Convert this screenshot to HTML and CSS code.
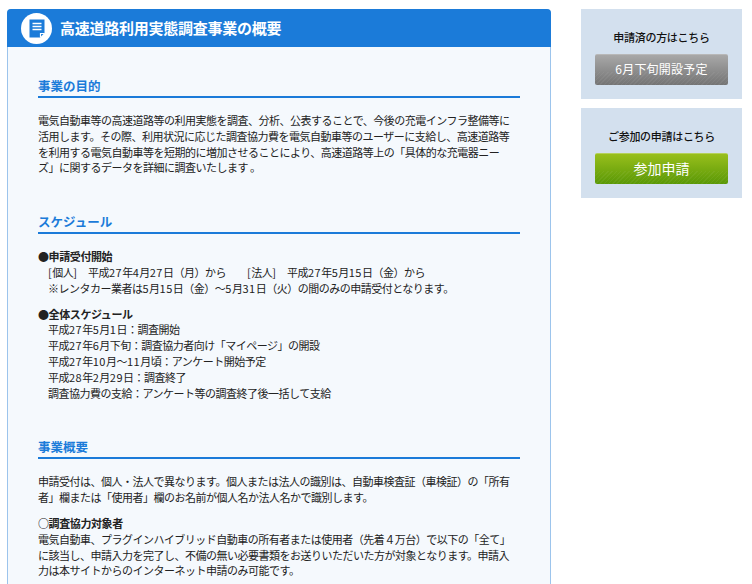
FILE: index.html
```html
<!DOCTYPE html>
<html lang="ja">
<head>
<meta charset="utf-8">
<title>高速道路利用実態調査事業の概要</title>
<link rel="stylesheet" href="styles.css">
</head>
<body>
<div class="page">
  <main class="card">
    <header class="card-head">
      <span class="badge">
        <svg width="16" height="19" viewBox="0 0 16 19"><path d="M0.5 0.5h15v13.5l-4.500 4.500H0.5z" fill="#1b7bd9"/><path d="M3.500 4.500h9M3.500 7.500h9M3.500 10.500h9" stroke="#fff" stroke-width="1.300"/><path d="M11.500 18v-3.500h4" fill="none" stroke="#fff" stroke-width="1.200"/></svg>
      </span>
      <h1>高速道路利用実態調査事業の概要</h1>
    </header>
    <div class="card-body">
      <section class="sec sec-first">
        <h2>事業の目的</h2>
        <p>電気自動車等の高速道路等の利用実態を調査、分析、公表することで、今後の充電インフラ整備等に<br>活用します。その際、利用状況に応じた調査協力費を電気自動車等のユーザーに支給し、高速道路等<br>を利用する電気自動車等を短期的に増加させることにより、高速道路等上の「具体的な充電器ニー<br>ズ」に関するデータを詳細に調査いたします 。</p>
      </section>
      <section class="sec">
        <h2>スケジュール</h2>
        <div class="block">
          <h3>●申請受付開始</h3>
          <div class="indent"><span class="n">[</span>個人<span class="n">]</span>　平成<span class="n">27</span>年<span class="n">4</span>月<span class="n">27</span>日（月）から　　<span class="n">[</span>法人<span class="n">]</span>　平成<span class="n">27</span>年<span class="n">5</span>月<span class="n">15</span>日（金）から<br>※レンタカー業者は<span class="n">5</span>月<span class="n">15</span>日（金）～<span class="n">5</span>月<span class="n">31</span>日（火）の間のみの申請受付となります。</div>
        </div>
        <div class="block">
          <h3>●全体スケジュール</h3>
          <div class="indent">平成<span class="n">27</span>年<span class="n">5</span>月<span class="n">1</span>日：調査開始<br>平成<span class="n">27</span>年<span class="n">6</span>月下旬：調査協力者向け「マイページ」の開設<br>平成<span class="n">27</span>年<span class="n">10</span>月～<span class="n">11</span>月頃：アンケート開始予定<br>平成<span class="n">28</span>年<span class="n">2</span>月<span class="n">29</span>日：調査終了<br>調査協力費の支給：アンケート等の調査終了後一括して支給</div>
        </div>
      </section>
      <section class="sec">
        <h2>事業概要</h2>
        <p>申請受付は、個人・法人で異なります。個人または法人の識別は、自動車検査証（車検証）の「所有<br>者」欄または「使用者」欄のお名前が個人名か法人名かで識別します。</p>
        <div class="block">
          <h3>○調査協力対象者</h3>
          <p>電気自動車、プラグインハイブリッド自動車の所有者または使用者（先着４万台）で以下の「全て」<br>に該当し、申請入力を完了し、不備の無い必要書類をお送りいただいた方が対象となります。申請入<br>力は本サイトからのインターネット申請のみ可能です。</p>
        </div>
      </section>
    </div>
  </main>
  <aside class="side">
    <div class="panel">
      <p class="panel-title">申請済の方はこちら</p>
      <a class="btn btn-gray">6月下旬開設予定</a>
    </div>
    <div class="panel">
      <p class="panel-title">ご参加の申請はこちら</p>
      <a class="btn btn-green">参加申請</a>
    </div>
  </aside>
</div>
</body>
</html>
```
FILE: styles.css
```css
* { box-sizing: border-box; }
html, body { margin: 0; padding: 0; height: 584px; overflow: hidden; background: #fff; }
body {
  font-family: "Noto Sans CJK JP", "Noto Sans", sans-serif;
  font-size: 11px;
  line-height: 15.8px;
  letter-spacing: -0.5px;
  color: #222;
}
.page { display: flex; align-items: flex-start; padding: 9px 10px 0 7px; gap: 30px; }
.card {
  width: 544px;
  flex: none;
  height: 600px;
  background: #f5f9fd;
  border: 1px solid #9cc4ec;
  border-radius: 4px 4px 0 0;
}
.card-head {
  height: 38px;
  margin: -1px -1px 0;
  background: #1b7bd9;
  border-radius: 4px 4px 0 0;
  display: flex;
  align-items: center;
  padding-left: 14px;
  gap: 8px;
}
.badge {
  width: 31px; height: 31px; border-radius: 50%; background: #fff;
  display: flex; align-items: center; justify-content: center;
}
h1 { margin: 0; font-size: 15px; font-weight: 700; color: #fff; letter-spacing: -0.25px; line-height: 20px; }
.card-body { padding: 0 30px; }
.sec { padding-top: 37px; }
.sec-first { padding-top: 30px; }
h2 {
  margin: 0 0 15px;
  font-size: 12.5px;
  line-height: 17px;
  font-weight: 700;
  color: #1b7bd9;
  border-bottom: 2px solid #1b7bd9;
  padding-bottom: 2px;
  letter-spacing: 0;
}
p { margin: 0; }
h3 { margin: 0; font-size: 11px; font-weight: 700; letter-spacing: -0.4px; }
.block { margin-top: 10px; }
.sec h2 + .block { margin-top: 0; }
.indent { padding-left: 10px; }
.n { letter-spacing: 0.5px; }
.side { width: 161px; flex: none; display: flex; flex-direction: column; gap: 9px; }
.panel {
  height: 90px;
  background: #d3e0ee;
  padding: 20px 14px 0;
  text-align: center;
}
.panel-title { font-size: 11px; font-weight: 500; line-height: 16px; color: #111; margin-bottom: 9px; letter-spacing: -0.3px; }
.btn {
  display: block;
  height: 31px;
  border-radius: 2px;
  color: #fff;
  line-height: 28px;
}
.btn-gray {
  background:
    repeating-linear-gradient(135deg, rgba(255,255,255,.05) 0 1px, transparent 1px 3px) bottom / 100% 45% no-repeat,
    linear-gradient(#a8a8a8, #747474);
  font-size: 12px;
  letter-spacing: 0.2px;
  border-top: 1px solid #b8b8b8;
}
.btn-green {
  background:
    repeating-linear-gradient(135deg, rgba(255,255,255,.05) 0 1px, transparent 1px 3px) bottom / 100% 45% no-repeat,
    linear-gradient(#98bf1c, #5a9806);
  font-size: 14px;
  letter-spacing: 0;
  border-top: 1px solid #b5d15a;
}
```
